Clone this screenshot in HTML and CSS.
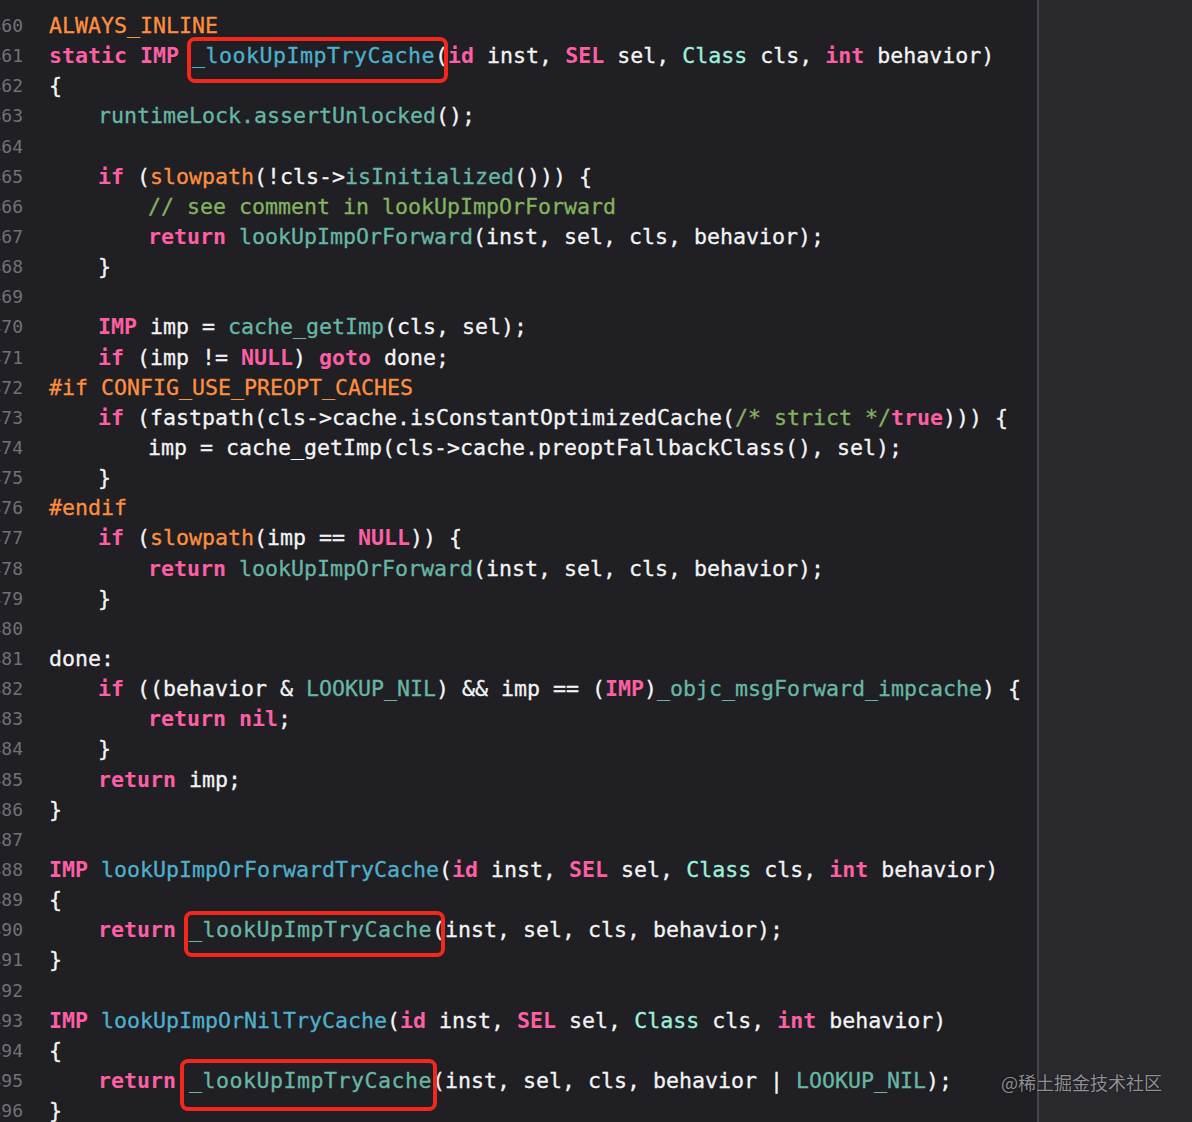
FILE: index.html
```html
<!DOCTYPE html>
<html lang="en">
<head>
    <meta charset="UTF-8">
    <meta name="viewport" content="width=device-width, initial-scale=1.0">
    <title>objc-runtime-new.mm</title>
    <link rel="stylesheet" href="styles.css">
</head>
<body>
    <div class="editor">
        <div class="gutter">
            <div class="num">460</div><div class="num">461</div><div class="num">462</div><div class="num">463</div>
            <div class="num">464</div><div class="num">465</div><div class="num">466</div><div class="num">467</div>
            <div class="num">468</div><div class="num">469</div><div class="num">470</div><div class="num">471</div>
            <div class="num">472</div><div class="num">473</div><div class="num">474</div><div class="num">475</div>
            <div class="num">476</div><div class="num">477</div><div class="num">478</div><div class="num">479</div>
            <div class="num">480</div><div class="num">481</div><div class="num">482</div><div class="num">483</div>
            <div class="num">484</div><div class="num">485</div><div class="num">486</div><div class="num">487</div>
            <div class="num">488</div><div class="num">489</div><div class="num">490</div><div class="num">491</div>
            <div class="num">492</div><div class="num">493</div><div class="num">494</div><div class="num">495</div>
            <div class="num">496</div>
        </div>

        <div class="code">
            <div class="line"><span class="macro">ALWAYS_INLINE</span></div>
            <div class="line"><span class="kw">static</span> <span class="kw">IMP</span> <span class="decl marked">_lookUpImpTryCache</span>(<span class="kw">id</span> inst, <span class="kw">SEL</span> sel, <span class="type">Class</span> cls, <span class="kw">int</span> behavior)</div>
            <div class="line">{</div>
            <div class="line i1"><span class="fn">runtimeLock.assertUnlocked</span>();</div>
            <div class="line"></div>
            <div class="line i1"><span class="kw">if</span> (<span class="macro">slowpath</span>(!cls-&gt;<span class="fn">isInitialized</span>())) {</div>
            <div class="line i2"><span class="comment">// see comment in lookUpImpOrForward</span></div>
            <div class="line i2"><span class="kw">return</span> <span class="fn">lookUpImpOrForward</span>(inst, sel, cls, behavior);</div>
            <div class="line i1">}</div>
            <div class="line"></div>
            <div class="line i1"><span class="kw">IMP</span> imp = <span class="fn">cache_getImp</span>(cls, sel);</div>
            <div class="line i1"><span class="kw">if</span> (imp != <span class="kw">NULL</span>) <span class="kw">goto</span> done;</div>
            <div class="line"><span class="macro">#if CONFIG_USE_PREOPT_CACHES</span></div>
            <div class="line i1"><span class="kw">if</span> (fastpath(cls-&gt;cache.isConstantOptimizedCache(<span class="comment">/* strict */</span><span class="kw">true</span>))) {</div>
            <div class="line i2">imp = cache_getImp(cls-&gt;cache.preoptFallbackClass(), sel);</div>
            <div class="line i1">}</div>
            <div class="line"><span class="macro">#endif</span></div>
            <div class="line i1"><span class="kw">if</span> (<span class="macro">slowpath</span>(imp == <span class="kw">NULL</span>)) {</div>
            <div class="line i2"><span class="kw">return</span> <span class="fn">lookUpImpOrForward</span>(inst, sel, cls, behavior);</div>
            <div class="line i1">}</div>
            <div class="line"></div>
            <div class="line">done:</div>
            <div class="line i1"><span class="kw">if</span> ((behavior &amp; <span class="fn">LOOKUP_NIL</span>) &amp;&amp; imp == (<span class="kw">IMP</span>)<span class="fn">_objc_msgForward_impcache</span>) {</div>
            <div class="line i2"><span class="kw">return</span> <span class="kw">nil</span>;</div>
            <div class="line i1">}</div>
            <div class="line i1"><span class="kw">return</span> imp;</div>
            <div class="line">}</div>
            <div class="line"></div>
            <div class="line"><span class="kw">IMP</span> <span class="decl">lookUpImpOrForwardTryCache</span>(<span class="kw">id</span> inst, <span class="kw">SEL</span> sel, <span class="type">Class</span> cls, <span class="kw">int</span> behavior)</div>
            <div class="line">{</div>
            <div class="line i1"><span class="kw">return</span> <span class="fn marked">_lookUpImpTryCache</span>(inst, sel, cls, behavior);</div>
            <div class="line">}</div>
            <div class="line"></div>
            <div class="line"><span class="kw">IMP</span> <span class="decl">lookUpImpOrNilTryCache</span>(<span class="kw">id</span> inst, <span class="kw">SEL</span> sel, <span class="type">Class</span> cls, <span class="kw">int</span> behavior)</div>
            <div class="line">{</div>
            <div class="line i1"><span class="kw">return</span> <span class="fn marked tight">_lookUpImpTryCache</span>(inst, sel, cls, behavior | <span class="fn">LOOKUP_NIL</span>);</div>
            <div class="line">}</div>
        </div>

        <div class="divider"></div>
        <div class="sidebar"></div>
    </div>

    <div class="watermark">@稀土掘金技术社区</div>
</body>
</html>
```

FILE: styles.css
```css
:root {
    --bg: #1f1f24;
    --bg-side: #29292e;
    --divider: #47474e;
    --text: #f4f4f5;
    --line-num: #717177;
    --keyword: #fc5fa3;
    --macro: #fd8f3f;
    --func: #67b7a4;
    --type: #9ef1dd;
    --decl: #4eb0cc;
    --comment: #84b360;
    --marker: #f3271c;
}

* {
    margin: 0;
    padding: 0;
    box-sizing: border-box;
}

body {
    position: relative;
    width: 1192px;
    height: 1122px;
    overflow: hidden;
    background: var(--bg);
    font-family: "DejaVu Sans Mono", "Liberation Mono", monospace;
}

.editor {
    display: flex;
    height: 1122px;
}

.gutter {
    width: 25px;
    margin-right: 24px;
    padding-top: 11px;
    padding-right: 2px;
    direction: rtl;
    overflow: hidden;
    flex-shrink: 0;
}

.num {
    height: 30.15px;
    line-height: 30.15px;
    font-size: 18px;
    color: var(--line-num);
    white-space: nowrap;
}

.code {
    flex: 1;
    padding-top: 11px;
    color: var(--text);
    font-size: 21.6px;
    -webkit-text-stroke: 0.3px currentColor;
}

.line {
    height: 30.15px;
    line-height: 30.15px;
    white-space: pre;
}

.line.i1 {
    padding-left: 49px;
}

.line.i2 {
    padding-left: 99px;
}

.kw {
    color: var(--keyword);
    font-weight: bold;
    -webkit-text-stroke: 0;
}

.macro {
    color: var(--macro);
}

.fn {
    color: var(--func);
}

.type {
    color: var(--type);
}

.decl {
    color: var(--decl);
}

.comment {
    color: var(--comment);
}

/* red boxes drawn over the calls */
.marked {
    position: relative;
    letter-spacing: 0.5px;
}

.marked::after {
    content: "";
    position: absolute;
    left: -5px;
    right: -13px;
    top: 50%;
    height: 38px;
    margin-top: -19px;
    border: 4.5px solid var(--marker);
    border-radius: 8px;
}

.marked.tight::after {
    left: -9px;
    right: -5px;
    height: 44px;
    margin-top: -21px;
}

.divider {
    width: 2px;
    background: var(--divider);
    flex-shrink: 0;
}

.sidebar {
    width: 153px;
    background: var(--bg-side);
    flex-shrink: 0;
}

.watermark {
    position: absolute;
    right: 30px;
    bottom: 27px;
    font-family: "Noto Sans CJK SC", "Noto Sans", sans-serif;
    font-size: 18px;
    color: #8f8f94;
    text-shadow: 0 0 2px rgba(0, 0, 0, 0.7);
}
```
